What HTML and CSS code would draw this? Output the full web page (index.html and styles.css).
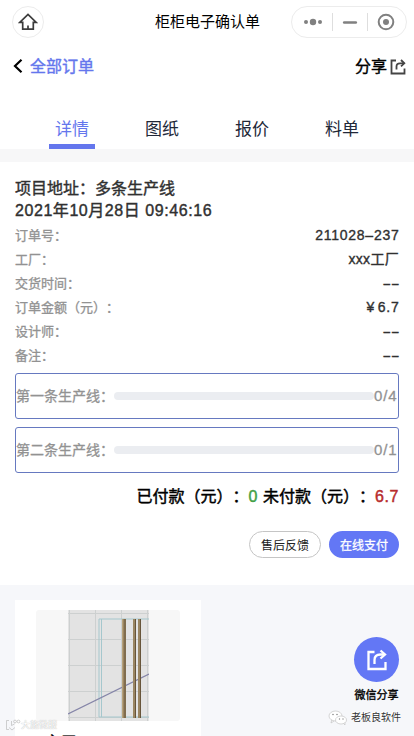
FILE: index.html
```html
<!DOCTYPE html>
<html lang="zh-CN">
<head>
<meta charset="utf-8">
<meta name="viewport" content="width=device-width, initial-scale=1">
<title>柜柜电子确认单</title>
<link rel="stylesheet" href="styles.css">
</head>
<body>
<header class="navbar">
  <div class="home"><svg width="20" height="20" viewBox="0 0 20 20" fill="none" stroke="#3c3c3c" stroke-width="1.7"><path d="M1.8 10.4 10 2.4l8.2 8H15.300v6.700H4.700v-6.700z"/><path d="M10 13.500v3.500"/></svg></div>
  <h1 class="title">柜柜电子确认单</h1>
  <div class="capsule">
    <svg width="20" height="12" viewBox="0 0 20 12" fill="#808080"><circle cx="3" cy="6" r="2"/><circle cx="10" cy="6" r="3.200"/><circle cx="17" cy="6" r="2"/></svg>
    <i class="split"></i>
    <svg width="16" height="12" viewBox="0 0 16 12"><path d="M2.200 6.500h11.600" stroke="#808080" stroke-width="2.600" stroke-linecap="round"/></svg>
    <i class="split"></i>
    <svg width="18" height="18" viewBox="0 0 18 18"><circle cx="9" cy="9" r="7.300" fill="none" stroke="#808080" stroke-width="2"/><circle cx="9" cy="9" r="3" fill="#808080"/></svg>
  </div>
</header>
<nav class="crumbs">
  <a class="back"><svg width="10" height="14" viewBox="0 0 10 14" fill="none" stroke="#000" stroke-width="2.200"><path d="M8.500 .8 2 7l6.500 6.200"/></svg><span>全部订单</span></a>
  <a class="share">分享<svg width="16" height="16" viewBox="0 0 16 16" fill="none" stroke="#444" stroke-width="1.800"><path d="M6 1.500H1.500v13h13V9.500"/><path d="M6.500 10.500V7.500q0-3.200 3.500-3.200h4"/><path d="m11 1 3.300 3.300L11 7.300"/></svg></a>
</nav>
<div class="tabs">
  <span class="tab active">详情</span><span class="tab">图纸</span><span class="tab">报价</span><span class="tab">料单</span>
</div>
<main class="detail">
  <h2 class="project">项目地址：多条生产线<br><span class="date">2021年10月28日 09:46:16</span></h2>
  <dl class="fields">
    <div class="row"><dt>订单号：</dt><dd>211028–237</dd></div>
    <div class="row"><dt>工厂：</dt><dd class="factory">xxx工厂</dd></div>
    <div class="row"><dt>交货时间：</dt><dd class="empty">––</dd></div>
    <div class="row"><dt>订单金额（元）：</dt><dd class="price">¥ 6.7</dd></div>
    <div class="row"><dt>设计师：</dt><dd class="empty">––</dd></div>
    <div class="row"><dt>备注：</dt><dd class="empty">––</dd></div>
  </dl>
  <div class="line"><span>第一条生产线：</span><i class="track"></i><span class="count">0/4</span></div>
  <div class="line"><span>第二条生产线：</span><i class="track"></i><span class="count">0/1</span></div>
  <div class="totals"><span>已付款（元）：</span><b class="paid">0</b><span>未付款（元）：</span><b class="due">6.7</b></div>
  <div class="actions"><button class="btn feedback">售后反馈</button><button class="btn pay">在线支付</button></div>
</main>
<section class="gallery">
  <article class="card">
    <div class="thumb">
      <svg width="81" height="111" viewBox="0 0 81 111">
        <rect width="81" height="111" fill="#e3e3e3"/>
        <path d="M0 3.500h81M0 29.500h81M0 55.500h81M0 81.500h81M0 107.500h81M1.500 0v111M27.500 0v111M53.500 0v111M79.500 0v111" stroke="#cdd0d0"/>
        <path d="M81 9H31v98h50M33.500 9v98" fill="none" stroke="#a5c7cd"/>
        <path d="M0 104 81 64" stroke="#8585a8" stroke-width="1.200"/>
        <g fill="#9b8662"><path d="M54 9h4v99h-4zM65 9h3v99h-3zM70 9h3v99h-3z"/></g>
        <path d="M54.500 9v99" stroke="#b7a17a"/><path d="M57 9v99M67.500 9v99M72.500 9v99" stroke="#67553b"/>
      </svg>
    </div>
    <h3 class="name">主卫</h3>
  </article>
</section>
<aside class="float-share">
  <div class="circle"><svg width="22" height="22" viewBox="0 0 22 22" fill="none" stroke="#fff" stroke-width="2.300"><path d="M8.500 3H2.500v17h17v-7"/><path d="M8.500 15v-4q0-5.500 6-5.500h4"/><path d="m14.500 1.500 4.500 4-4.500 4"/></svg></div>
  <span>微信分享</span>
</aside>
<div class="account">
  <svg width="20" height="16" viewBox="0 0 20 16" fill="#fff" stroke="#c4c4c4" stroke-width=".7"><path d="m4 9-1 4 3-2"/><ellipse cx="7.500" cy="6" rx="6.500" ry="5"/><path d="m15 13 2 2v-3"/><ellipse cx="13" cy="10" rx="5.500" ry="4"/><g fill="#888" stroke="none"><circle cx="5" cy="4.500" r=".8"/><circle cx="9" cy="4.500" r=".8"/><circle cx="11.500" cy="9" r=".7"/><circle cx="15" cy="9" r=".7"/></g></svg>
  <span>老板良软件</span>
</div>
<div class="watermark"><svg width="16" height="13" viewBox="0 0 16 13" fill="none" stroke="#bbb" stroke-width=".7"><path d="M4 1.500H1.500v9H4M6.500 2v4.500l3-1.500M4 8.500l3 2.500 3-2.500"/><circle cx="10" cy="2.500" r="1.400"/><circle cx="13.500" cy="2.500" r="1.400"/></svg><span>大施微服</span></div>
</body>
</html>
```
FILE: styles.css
```css
* { box-sizing: border-box; }
body {
  margin: 0;
  width: 414px;
  height: 736px;
  overflow: hidden;
  position: relative;
  background: #fff;
  color: #000;
  font-family: "Liberation Sans", "Noto Sans CJK SC", sans-serif;
  text-spacing-trim: space-all;
}
h1, h2, h3, dl, dd { margin: 0; font-weight: 400; }
svg { display: block; flex: none; }
.navbar {
  height: 44px;
  padding: 0 7px 0 12px;
  display: grid;
  grid-template-columns: 116px 1fr 116px;
  align-items: center;
}
.home {
  width: 32px;
  height: 32px;
  border: 1px solid #ececec;
  border-radius: 50%;
  display: grid;
  place-items: center;
}
.title { font-size: 15px; line-height: 22px; text-align: center; margin-left: -5px; padding-left: 1px; }
.capsule {
  height: 32px;
  border: 1px solid #ececec;
  border-radius: 16px;
  display: flex;
  align-items: center;
  justify-content: space-between;
  padding: 0 11px;
}
.split { width: 1px; height: 18px; background: #dedede; }
.crumbs {
  height: 44px;
  padding: 0 8px 0 13px;
  display: flex;
  justify-content: space-between;
  align-items: center;
}
.back, .share { display: flex; align-items: center; line-height: 24px; }
.back { gap: 7px; font-size: 16px; color: #6476ed; -webkit-text-stroke: .4px #6476ed; }
.back span { padding-top: 1px; }
.share { gap: 3px; font-size: 16px; padding-top: 1px; -webkit-text-stroke: .4px #000; }
.tabs {
  height: 61px;
  padding: 0 27px;
  display: grid;
  grid-template-columns: repeat(4, 90px);
  justify-items: center;
}
.tab { width: 46px; padding-top: 30px; font-size: 17px; line-height: 24px; text-align: center; color: #222838; }
.active { height: 61px; color: #6476ed; border-bottom: 5px solid #6476ed; }
.detail { border-top: 13px solid #f7f7f8; height: 436px; padding: 16px 15px 0; }
.project { font-size: 16px; line-height: 22px; color: #303030; -webkit-text-stroke: .4px #303030; }
.date { letter-spacing: .56px; }
.fields { padding-top: 2px; }
.row { height: 24px; display: flex; justify-content: space-between; align-items: center; line-height: 20px; }
.row dt { font-size: 13px; color: #929292; -webkit-text-stroke: .3px #929292; }
.row dd { font-size: 14px; color: #303030; letter-spacing: .75px; margin: -2px -.5px 0 0; -webkit-text-stroke: .35px #303030; }
.row .factory { letter-spacing: .3px; margin-right: 0; }
.row .price { word-spacing: -2px; }
.row .empty { letter-spacing: 2px; margin: 0 -1.5px 0 0; font-size: 13px; font-family: Inter, sans-serif; }
.line {
  height: 46px;
  margin-top: 8px;
  border: 1px solid #6679c0;
  border-radius: 3px;
  display: flex;
  align-items: center;
  font-size: 14px;
  line-height: 20px;
  color: #929292;
  -webkit-text-stroke: .3px #929292;
}
.fields + .line { margin-top: 5px; }
.track { flex: 1; height: 8px; border-radius: 4px; background: #ebedf1; }
.count { font-size: 15px; width: 24px; letter-spacing: .9px; }
.totals { display: flex; justify-content: flex-end; margin-top: 12px; font-size: 16px; line-height: 24px; -webkit-text-stroke: .45px; }
.totals b { font-weight: 400; letter-spacing: .6px; }
.paid { color: #43a047; margin-right: 5px; }
.due { color: #b72c2c; }
.actions { display: flex; justify-content: flex-end; gap: 8px; margin-top: 22px; }
.btn { height: 27px; padding: 0; border: 0; border-radius: 14px; font: 12px/25px "Noto Sans CJK SC", sans-serif; }
.feedback { width: 72px; border: 1px solid #c5c5c5; background: #fff; color: #222; }
.pay { width: 70px; background: #6377f5; color: #fff; -webkit-text-stroke: .3px #fff; }
.gallery { height: 151px; padding: 15px; background: #f6f7fa; overflow: hidden; }
.card { width: 186px; height: 180px; padding: 10px 21px; background: #fff; }
.thumb { height: 111px; background: #f7f7f7; border-radius: 3px; padding-left: 32px; }
.name { font-size: 16px; line-height: 24px; margin: 10px 0 0 9px; -webkit-text-stroke: .4px; }
.float-share {
  position: absolute;
  top: 637px;
  right: 15px;
  display: flex;
  flex-direction: column;
  align-items: center;
  font-size: 11px;
  line-height: 16px;
  gap: 5px;
  -webkit-text-stroke: .35px;
}
.circle { width: 45px; height: 45px; border-radius: 50%; background: #6377f5; display: grid; place-items: center; }
.account {
  position: absolute;
  left: 328px;
  top: 710px;
  display: flex;
  align-items: center;
  gap: 3px;
  font-size: 10px;
  line-height: 16px;
  color: #333;
  text-shadow: -1px -1px #fff;
}
.watermark {
  position: absolute;
  left: 5px;
  top: 719px;
  display: flex;
  align-items: center;
  font-size: 9px;
  line-height: 13px;
  color: #fff;
  text-shadow: 0 0 1px #999;
}
```
